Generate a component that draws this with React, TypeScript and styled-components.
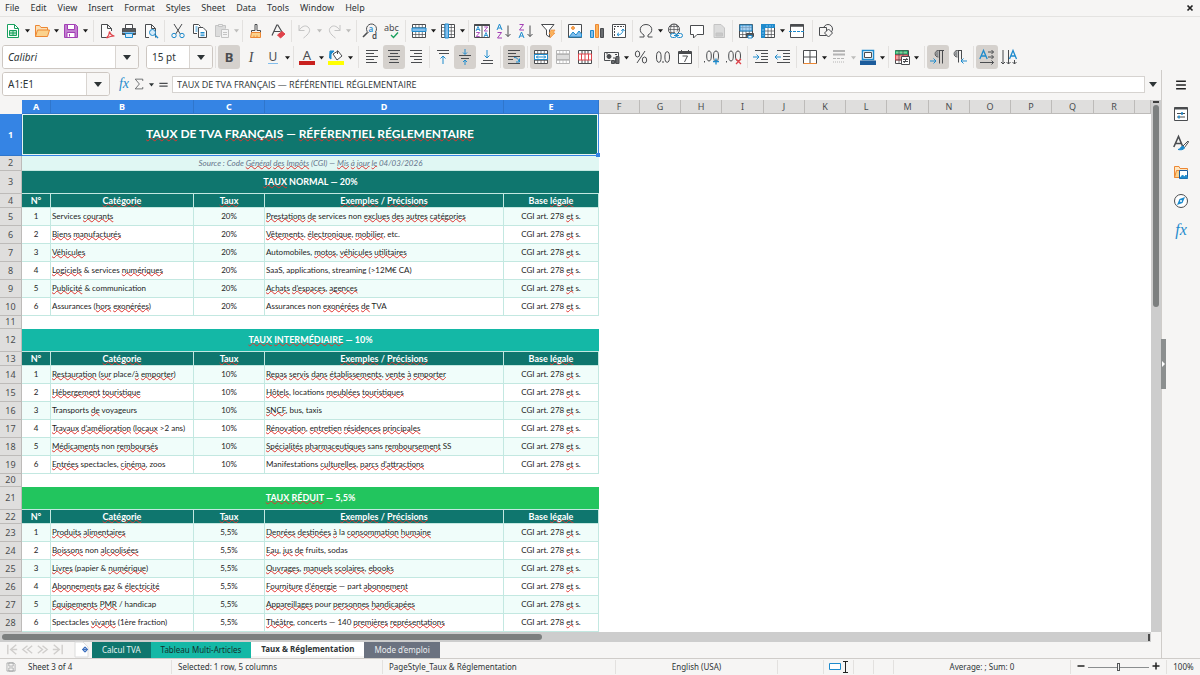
import React from 'react';
import styled, { createGlobalStyle, css } from 'styled-components';

const INK = '#4a4c4f';
const BLUE = '#1e8bcd';
const SKY = '#83beec';
const ORANGE = '#ed8733';
const PALE = '#c4c4c4';
const PURPLE = '#a33fb5';
const RED = '#e0434b';
const GREEN = '#18a05e';

const Global = createGlobalStyle`
  * { box-sizing: border-box; }
  body { margin: 0; background: #f6f5f4; color: #2e3436; font-family: "Noto Sans", "Open Sans", sans-serif; font-size: 11px; }
  button, input { font: inherit; color: inherit; margin: 0; }
  button { border: 0; padding: 0; background: none; }
  svg { overflow: visible; }
`;

const Window = styled.div`
  display: flex;
  flex-direction: column;
  height: 100vh;
  overflow: hidden;
  background: #f6f5f4;
`;

/* ---------- menu bar ---------- */
const MenuBar = styled.nav`
  display: flex;
  align-items: center;
  gap: 11px;
  height: 17px;
  padding: 0 6px 0 5px;
  border-bottom: 1px solid #e4e3e1;
`;
const MenuItem = styled.button`
  font-size: 9px;
  line-height: 16px;
`;
const CloseButton = styled.button`
  display: flex;
  margin-left: auto;
`;

/* ---------- tool bars ---------- */
const Toolbar = styled.div<{ $height: number }>`
  display: flex;
  align-items: center;
  height: ${p => p.$height}px;
  padding-left: 2px;
`;
const ToolButton = styled.button<{ $on?: boolean }>`
  display: flex;
  align-items: center;
  justify-content: center;
  flex: none;
  width: 22px;
  height: 24px;
  border-radius: 3px;
  background: ${p => (p.$on ? '#d5d1cd' : 'transparent')};
`;
const ArrowButton = styled.button<{ $off?: boolean }>`
  display: flex;
  align-items: center;
  justify-content: center;
  flex: none;
  width: 7px;
  height: 24px;
  color: ${p => (p.$off ? '#bdbdbb' : '#1b1b1b')};
`;
const Divider = styled.span<{ $wide?: boolean }>`
  flex: none;
  width: 1px;
  height: 22px;
  margin: 0 2px 0 ${p => (p.$wide ? 4 : 2)}px;
  background: #e3e1df;
`;
const Combo = styled.div<{ $width: number; $gap: number }>`
  display: flex;
  flex: none;
  width: ${p => p.$width}px;
  height: 24px;
  margin-right: ${p => p.$gap}px;
  border: 1px solid #cdc7c2;
  border-radius: 3px;
  overflow: hidden;
  background: #fff;
`;
const ComboInput = styled.input<{ $italic?: boolean }>`
  flex: 1;
  min-width: 0;
  padding: 0 5px;
  border: 0;
  background: #fff;
  font-size: 10px;
  font-style: ${p => (p.$italic ? 'italic' : 'normal')};
`;
const ComboArrow = styled.button`
  display: flex;
  align-items: center;
  justify-content: center;
  width: 23px;
  border-left: 1px solid #d9d5d1;
  background: #f8f7f6;
`;

/* ---------- work area ---------- */
const Main = styled.div`
  display: flex;
  flex: 1;
  min-height: 0;
`;
const Document = styled.div`
  display: flex;
  flex-direction: column;
  flex: 1;
  min-width: 0;
`;
const FormulaBar = styled.div`
  display: flex;
  align-items: center;
  height: 28px;
  margin-bottom: 2px;
  padding-left: 2px;
`;
const FormulaInput = styled.input`
  flex: 1;
  min-width: 0;
  height: 17px;
  margin-left: 2px;
  padding: 0 4px;
  border: 1px solid #d6d3d0;
  background: #fff;
  font-family: "Open Sans", "Noto Sans", sans-serif;
  font-size: 9px;
`;
const FormulaTool = styled.button<{ $width: number }>`
  display: flex;
  align-items: center;
  justify-content: center;
  flex: none;
  width: ${p => p.$width}px;
  height: 22px;
`;
const SheetArea = styled.div`
  display: flex;
  flex: 1;
  min-height: 0;
`;
const GridView = styled.div`
  flex: 1;
  min-width: 0;
  overflow: hidden;
  background: #fff;
`;
const VerticalTrack = styled.div`
  width: 10px;
  padding: 1px 2px 0;
  background: #cdcdcd;
`;
const SplitMark = styled.div`
  height: 2px;
  margin-bottom: 2px;
  background: #3d3d3d;
`;
const VerticalThumb = styled.div`
  height: 38%;
  border-radius: 3px;
  background: #7c7f7f;
`;
const HorizontalTrack = styled.div`
  display: flex;
  align-items: center;
  justify-content: space-between;
  height: 10px;
  margin-right: 10px;
  padding: 2px 1px 2px 2px;
  background: #cdcdcd;
`;
const HorizontalThumb = styled.div`
  width: 47%;
  height: 6px;
  border-radius: 3px;
  background: #7c7f7f;
`;
const EndMark = styled.div`
  width: 2px;
  height: 7px;
  background: #4a4a4a;
`;

/* ---------- grid ---------- */
const Grid = styled.table`
  width: 100%;
  table-layout: fixed;
  border-collapse: separate;
  border-spacing: 0;
`;
const Row = styled.tr<{ $height: number }>`
  height: ${p => p.$height}px;
`;
const headCell = css<{ $selected?: boolean }>`
  padding: 0;
  overflow: hidden;
  border-right: 1px solid ${p => (p.$selected ? '#2f76cc' : '#bdbbb9')};
  border-bottom: 1px solid ${p => (p.$selected ? '#2f76cc' : '#bdbbb9')};
  background: ${p => (p.$selected ? '#3584e4' : '#dfdedd')};
  color: ${p => (p.$selected ? '#fff' : '#4a4d4f')};
  font-size: 9px;
  font-weight: ${p => (p.$selected ? 700 : 400)};
  line-height: 12px;
`;
const ColHead = styled.th<{ $selected?: boolean }>`
  ${headCell}
`;
const RowHead = styled.th<{ $selected?: boolean }>`
  ${headCell}
`;
const Corner = styled.td`
  padding: 0;
  background: #f6f5f4;
`;
const Cell = styled.td<{ $bg: string; $left?: boolean }>`
  padding: 0 1px 1px;
  overflow: hidden;
  white-space: nowrap;
  border-right: 1px solid #c3e8e1;
  border-bottom: 1px solid #c3e8e1;
  background: ${p => p.$bg};
  color: #1d1d1d;
  font-family: Lato, "Noto Sans", sans-serif;
  font-size: 8px;
  line-height: 12px;
  text-align: ${p => (p.$left ? 'left' : 'center')};
`;
const FieldHead = styled(Cell).attrs({ $bg: '#0f766e' })`
  padding-bottom: 0;
  color: #fff;
  font-size: 9px;
  font-weight: 700;
`;
const Band = styled(Cell)`
  padding-bottom: 0;
  color: #fff;
  font-size: 9px;
  font-weight: 700;
  border-right: 0;
`;
const TitleCell = styled(Band)`
  position: relative;
  overflow: visible;
  padding-bottom: 1px;
  border-right: 1px solid #3584e4;
  border-bottom: 1px solid #3584e4;
  box-shadow: inset 0 0 0 1px #e6f5f3;
  font-size: 12px;
  line-height: 18px;
`;
const FillHandle = styled.span`
  position: absolute;
  right: -2px;
  bottom: -2px;
  width: 4px;
  height: 4px;
  background: #3584e4;
`;
const NoteCell = styled(Cell)`
  padding-bottom: 0;
  color: #64748b;
  font-style: italic;
  border-right: 0;
`;
const Blank = styled.td`
  padding: 0;
`;
const Misspelt = styled.span`
  text-decoration: underline wavy #e0352f;
  text-decoration-thickness: 1px;
  text-decoration-skip-ink: none;
  text-underline-offset: -1px;
`;

/* ---------- tabs ---------- */
const TabBar = styled.div`
  display: flex;
  align-items: flex-start;
  height: 16px;
  padding-left: 5px;
`;
const TabNav = styled.div`
  display: flex;
  width: 62px;
`;
const NavButton = styled.button`
  display: flex;
  width: 15px;
  height: 16px;
`;
const AddSheet = styled.button`
  display: flex;
  width: 18px;
  height: 15px;
  margin: 0 0 0 7px;
`;
const Tab = styled.button<{ $bg: string; $fg: string; $active?: boolean }>`
  height: ${p => (p.$active ? 14 : 16)}px;
  padding: 0 10px;
  background: ${p => p.$bg};
  color: ${p => p.$fg};
  font-size: 8px;
  font-weight: ${p => (p.$active ? 700 : 400)};
  line-height: 14px;
`;

/* ---------- side bar ---------- */
const SideBar = styled.aside`
  position: relative;
  display: flex;
  flex-direction: column;
  align-items: center;
  gap: 7px;
  width: 39px;
  padding-top: 4px;
  border-left: 1px solid #cfccc9;
`;
const SideButton = styled.button`
  display: flex;
  align-items: center;
  justify-content: center;
  width: 24px;
  height: 22px;
`;
const SideGrip = styled.button`
  position: absolute;
  left: -1px;
  top: calc(50% - 25px);
  display: flex;
  align-items: center;
  width: 5px;
  height: 50px;
  background: #8c8f8f;
`;

/* ---------- status bar ---------- */
const StatusBar = styled.footer`
  display: grid;
  grid-template-columns: 22px 150px 211fr 233fr 162fr 46px 30px 20px 20px 177fr 96px 33px;
  height: 17px;
  border-top: 1px solid #cfccc9;
  font-size: 8px;
`;
const StatusCell = styled.div<{ $align?: string }>`
  display: flex;
  align-items: center;
  justify-content: ${p => p.$align || 'center'};
  padding: 0 6px;
  margin: 1px 0;
  line-height: 14px;
  white-space: nowrap;
  border-right: 1px solid #e3e1df;
  &:first-child, &:last-child { border-right: 0; }
`;
const ZoomCell = styled(StatusCell)`
  gap: 3px;
`;
const ZoomSlider = styled.input`
  appearance: none;
  flex: 1;
  min-width: 0;
  height: 10px;
  background: linear-gradient(#8b8e8f, #8b8e8f) center / 100% 1px no-repeat;
  &::-webkit-slider-thumb {
    appearance: none;
    width: 3px;
    height: 8px;
    border: 1px solid #55585a;
    background: #f6f5f4;
  }
`;

/* ---------- icons ---------- */
const Svg = ({ children, size = 16 }: { children: React.ReactNode; size?: number }) => (
  <svg width={size} height={size} viewBox="0 0 16 16" fill="none" stroke={INK} strokeWidth="1" aria-hidden="true">
    {children}
  </svg>
);
const Glyph = ({ x, y, size, fill = INK, children, ...rest }: any) => (
  <text x={x} y={y} fontSize={size} fill={fill} stroke="none" fontFamily="Noto Sans, sans-serif" {...rest}>{children}</text>
);
const Caret = ({ w = 5 }: { w?: number }) => (
  <svg width={w} height={w} viewBox="0 0 8 8" aria-hidden="true"><path d="M0 2h8L4 7z" fill="currentColor" /></svg>
);
const lines = (rows: [number, number, number][], stroke = INK) =>
  rows.map(([x1, x2, y]) => <path key={y} d={`M${x1} ${y}H${x2}`} stroke={stroke} />);
const gridLines = (stroke = INK) => <><path d="M1.500 1.500h13v13h-13z" fill="#fff" stroke={stroke} /><path d="M1.500 4.500h13M1.500 8h13M1.500 11.500h13M4.700 1.500v13M8 1.500v13M11.300 1.500v13" stroke={stroke} strokeWidth=".7" /></>;

const icons: Record<string, React.ReactNode> = {
  new: <><path d="M2.500 1.500h7l4 4v9h-11z" fill="#fff" stroke={GREEN} /><path d="M9.500 1.500v4h4" stroke={GREEN} /><path d="M4.500 7.500h7v5h-7zM4.500 10h7M8 7.500v5" stroke={GREEN} fill="#b5e5c8" /></>,
  open: <><path d="M1.500 13.500v-11h4l1.500 2h6.500v3" stroke={ORANGE} fill="#fbe0b6" /><path d="M1.500 13.500l2-6.500h12l-2 6.500z" fill="#fbd28d" stroke={ORANGE} /></>,
  save: <><path d="M1.500 1.500h11l2 2v11h-13z" fill="#c27fd0" stroke={PURPLE} /><path d="M4.500 1.500h7v5h-7zM4 9.500h8v5H4z" fill="#fff" stroke={PURPLE} /><path d="M6.500 11v2.500" stroke={PURPLE} /></>,
  pdf: <><path d="M8 14.500H2.500v-13h6l4 4V8M8.500 1.500v4h4" fill="#fcfcfc" /><path d="M7.500 15c2-2 3-4 3-6.500 1 3 2 4.500 5 4.500-3 0-5 .5-8 2z" stroke={RED} strokeWidth="1.200" /></>,
  print: <><path d="M4.500 5.500v-4h7v4" fill="#fff" /><path d="M1.500 5.500h13v6h-13z" fill="#55585b" /><path d="M1.500 9.500h13" stroke={SKY} /><path d="M4.500 10.500h7v4h-7z" fill="#d7ebf9" stroke={BLUE} /></>,
  preview: <><path d="M6 14.500H2.500v-13h6l4 4M8.500 1.500v4h4v9" fill="#fcfcfc" /><circle cx="9.500" cy="9.500" r="3" stroke={BLUE} fill="#d7ebf9" /><path d="M12 12l3 3" stroke={BLUE} strokeWidth="1.400" /></>,
  cut: <><path d="M4 1l6.300 10M12 1L5.700 11" /><circle cx="4" cy="12.500" r="2.200" stroke={BLUE} /><circle cx="12" cy="12.500" r="2.200" stroke={BLUE} /></>,
  copy: <><path d="M5 10.500H1.500v-9h5l2 2" fill="#fff" /><path d="M3.500 4h2M3.500 6h2M3.500 8h2" stroke={BLUE} /><path d="M6.500 4.500h4.500l3.500 3.500v6.500h-8z" fill="#fff" /><path d="M8.500 9.500h4M8.500 11h4M8.500 12.700h4" stroke={BLUE} /></>,
  paste: <><path d="M6 13.500H1.500v-11h10v3" fill="#dcdcdc" stroke={PALE} /><path d="M4.500 1.500h4v2h-4z" fill="#eee" stroke={PALE} /><path d="M7.500 6.500h7v8h-7z" fill="#f4f4f4" stroke={PALE} /><path d="M9 9.500h4M9 11.500h4" stroke={PALE} /></>,
  brush: <><path d="M7 1.500h2v6h3.500v2h-9v-2H7z" /><path d="M3.500 9.500h9v5h-10z" fill="#fbd28d" stroke={ORANGE} /><path d="M6 14.500v-2M9 14.500v-2" stroke={ORANGE} /></>,
  clear: <><path d="M2 12.500L6.800 2h1L12 9M4 8.500h6.500" strokeWidth="1.200" /><path d="M7.500 12l4.500-3.500 3 2.500-4.500 4z" fill={RED} stroke={RED} /></>,
  undo: <path d="M2 2v5.500h5.500M2 7.500C4 4 8 1.500 11 4c3.500 3 1 7-4.500 11" stroke={PALE} />,
  redo: <path d="M14 2v5.500H8.500M14 7.500C12 4 8 1.500 5 4 1.500 7 4 11 9.500 15" stroke={PALE} />,
  find: <><path d="M13.500 9a5 5 0 1 0-7 1" /><path d="M5.500 9.500L1 14" strokeWidth="1.600" /><Glyph x="6.500" y="8.500" size="8" fill={BLUE} fontWeight="600">a</Glyph><Glyph x="10" y="16" size="8" fontWeight="600">d</Glyph></>,
  spell: <><Glyph x="0" y="8" size="9">abc</Glyph><path d="M7 12l2.500 2.500L14 9.500" stroke={GREEN} strokeWidth="1.300" /></>,
  row: <>{gridLines()}<path d="M1 5h14v3.500H1z" fill={SKY} stroke={BLUE} /></>,
  col: <>{gridLines()}<path d="M5 1h3.500v14H5z" fill={SKY} stroke={BLUE} /></>,
  sort: <><path d="M.5 1.500h15v13H.5zM8 1.500v13" fill="#fff" /><path d="M.5 2h15" strokeWidth="2" /><path d="M2 8l2-4.500L6 8M2.700 6.500h2.600M10 14l2-4.500 2 4.500M10.700 12.500h2.600" stroke={BLUE} strokeWidth=".9" /><path d="M2.200 9.500h3.500l-3.500 4h3.500M10.200 4h3.500l-3.500 4h3.500" stroke={PURPLE} strokeWidth=".9" /></>,
  asc: <><path d="M1 7l2.500-6L6 7M2 5h3" stroke={BLUE} /><path d="M1.500 9.500h4l-4 5.500h4.500" stroke={PURPLE} /><path d="M12 2.500v11M9.500 11l2.500 2.500 2.500-2.500" /></>,
  desc: <><path d="M1.500 1.500h4L1.500 7h4.500" stroke={PURPLE} /><path d="M1 15l2.500-6L6 15M2 13h3" stroke={BLUE} /><path d="M12 2.500v11M9.500 11l2.500 2.500 2.500-2.500" /></>,
  filter: <><path d="M1.500 1.500h12.500L9.500 7v7l-3-2V7z" fill="#fff" /><path d="M11 7h4l-2 3h2l-5 5 1-4H9z" fill="#fbb45c" stroke={ORANGE} strokeWidth=".6" /></>,
  image: <><path d="M1.500 1.500h13v13h-13z" fill="#fff" /><path d="M2 14l4-5 3 3 3-4 2.500 3v3z" fill={SKY} stroke={BLUE} /><circle cx="6" cy="5" r="1.400" fill="#fbb45c" stroke={ORANGE} /></>,
  chart: <><path d="M1.500 7.500h3v7h-3z" fill={SKY} stroke={BLUE} /><path d="M6.500 1.500h3v13h-3z" fill="#fbb45c" stroke={ORANGE} /><path d="M11.500 5.500h3v9h-3z" fill="#6a6d70" /></>,
  pivot: <><path d="M1.500 1.500h13v13h-13z" fill="#fff" /><path d="M3 3.500h10M3.500 5v8" strokeDasharray="2 1" /><path d="M6 11.500c4 1 6-2 6-5M12 6l-1.700 2M12 6l1.500 2M6 11.500l2-1.800M6 11.500l2 1.500" stroke={BLUE} /></>,
  omega: <path d="M1.500 14H6v-2C0 9 1.500 1.500 8 1.500S16 9 10 12v2h4.500" />,
  link: <><circle cx="7" cy="6.500" r="5.500" /><path d="M1.500 6.500h11M7 1v11M3 3.500h8M3 9.500h5M5 1.500c-2 3-2 7 0 10M9 1.500c2 3 2 5 1 7" strokeWidth=".7" /><rect x="3.500" y="10.500" width="6" height="4" rx="2" stroke={BLUE} fill="#f6f5f4" /><rect x="9.500" y="10.500" width="6" height="4" rx="2" stroke={BLUE} /><path d="M7 12.500h5" stroke={BLUE} /></>,
  comment: <path d="M1.500 2.500h13v9H8L4.500 15v-3.500h-3z" fill="#fff" />,
  header: <><path d="M3 1.500h7l3.500 3.500v9.500H3z" fill="#dcdcdc" stroke={PALE} /><path d="M5 10h6.500v3H5z" fill="#c9c9c9" stroke={PALE} /></>,
  printArea: <>{gridLines()}<path d="M2 2h12v6H2z" fill={SKY} fillOpacity=".7" stroke={BLUE} /><path d="M8.500 10.500h7v3h-7z" fill="#55585b" /><path d="M10 12.500h4v2.500h-4z" fill="#fff" stroke={BLUE} /></>,
  freeze: <>{gridLines()}<path d="M1.500 1.500h13v3h-10v10h-3z" fill={BLUE} stroke={BLUE} /><path d="M6 3h7M3 6v7" stroke={SKY} strokeDasharray="2 1" /></>,
  split: <><path d="M1.500 1.500h13v13h-13z" fill="#fff" /><path d="M1.500 2.500h13" strokeWidth="2.500" /><path d="M0 8.500h16" stroke={BLUE} strokeDasharray="3 1" /></>,
  draw: <><circle cx="10" cy="6" r="4.500" /><path d="M1.500 4.500h7v8h-7z" fill="#f6f5f4" /><path d="M10.500 6l4 4-4 4-4-4z" fill="#f6f5f4" /></>,
  bold: <Glyph x="8" y="13" size="13" fontWeight="700" textAnchor="middle">B</Glyph>,
  italic: <Glyph x="8" y="12.500" size="14" fontStyle="italic" textAnchor="middle" fontFamily="Liberation Serif, serif">I</Glyph>,
  underline: <><Glyph x="8" y="12" size="12" textAnchor="middle">U</Glyph><path d="M3 14.500h10" stroke={SKY} /></>,
  fontColor: <><Glyph x="8" y="10.500" size="13" textAnchor="middle">A</Glyph><path d="M0 12h16v4H0z" fill="#c9211e" stroke="none" /></>,
  highlight: <><path d="M5 5l5-3 4 5-5 4z" fill="#fff" /><path d="M9.500 5V1.500" /><path d="M2 2h4L3 5v5L1.500 9z" fill={BLUE} stroke={BLUE} /><path d="M0 12h16v4H0z" fill="#ff0" stroke="none" /></>,
  left: lines([[2, 14, 1.5], [2, 10, 4.5], [2, 14, 7.5], [2, 10, 10.5], [2, 13, 13.5]]),
  center: lines([[2, 14, 1.5], [4, 12, 4.5], [2, 14, 7.5], [4, 12, 10.5], [3, 13, 13.5]]),
  right: lines([[2, 14, 1.5], [6, 14, 4.5], [2, 14, 7.5], [6, 14, 10.5], [3, 14, 13.5]]),
  top: <>{lines([[2, 14, 1.5], [4, 14, 4.5]])}<path d="M8 15V7M5.500 9.500L8 7l2.500 2.500" stroke={BLUE} /></>,
  middle: <>{lines([[2, 14, 6.5], [4, 12, 9.5]])}<path d="M8 0v5M6 3.500l2 2 2-2M8 16v-4.500M6 13l2-2 2 2" stroke={BLUE} /></>,
  bottom: <>{lines([[4, 14, 11.5], [2, 14, 14.5]])}<path d="M8 1v8M5.500 6.500L8 9l2.500-2.500" stroke={BLUE} /></>,
  wrap: <>{lines([[2, 14, 1.5], [2, 10, 4.5], [2, 14, 7.5], [2, 7, 10.5], [2, 14, 14.5]])}<path d="M8 8.500c3 0 4 1 5 4M13.500 9.500v3.500H10" stroke={BLUE} /></>,
  merge: <>{gridLines()}<path d="M1.500 5.500h13v5h-13z" fill="#fff" stroke={BLUE} /><path d="M3 8h10M5 6.500L3.500 8 5 9.500M11 6.500L12.500 8 11 9.500" stroke={BLUE} /></>,
  unmerge: <>{gridLines('#b4b4b4')}<path d="M1.500 5.500h13v5h-13z" fill="#dcdcdc" stroke="#b4b4b4" /></>,
  split2: <><path d="M1.500 1.500h13v13h-13zM5 1.500v4M11 1.500v4M8 1.500v4M5 11v3M8 11v3M11 11v3" fill="#fff" /><path d="M1.500 5h13v6h-13zM8 5v6M4.500 5v6M11.500 5v6" fill="#fff" stroke={RED} /></>,
  currency: <><path d="M14.500 7V3.500H.5v8h6" /><circle cx="5" cy="7.500" r="2" fill={INK} /><path d="M3 3.500v2M11 5.500h2" /><path d="M7.500 11.500h3v3h-3zM12 7.500h3v7h-3z" fill="#6a6d70" /><path d="M9 9h2.500v5.500" /></>,
  percent: <g strokeWidth="1"><ellipse cx="4.500" cy="5" rx="2.200" ry="3" /><ellipse cx="11.500" cy="11" rx="2.200" ry="3" /><path d="M12 2L4 14" /></g>,
  number: <g strokeWidth="1"><ellipse cx="3.800" cy="8" rx="2.300" ry="5.300" /><ellipse cx="12.200" cy="8" rx="2.300" ry="5.300" /><path d="M8 12v2" /></g>,
  date: <><path d="M1.500 2.500h13v12h-13z" fill="#fff" /><path d="M1.500 4h13" strokeWidth="2" /><path d="M4.500 1v3M11.500 1v3" /><path d="M5.500 7h5l-3 6" /></>,
  addDec: <><path d="M.5 12v1.500" /><ellipse cx="5" cy="7" rx="2.300" ry="5" /><ellipse cx="12" cy="7" rx="2.500" ry="5" /><path d="M12 9.500v6M9 12.500h6" stroke={BLUE} strokeWidth="1.300" /></>,
  delDec: <><path d="M.5 12v1.500" /><ellipse cx="5" cy="7" rx="2.300" ry="5" /><ellipse cx="12" cy="7" rx="2.500" ry="5" /><path d="M10 10l5 5M15 10l-5 5" stroke={RED} strokeWidth="1.300" /></>,
  indent: <>{lines([[2, 15, 1.5], [8, 15, 4.5], [8, 15, 7.5], [8, 15, 10.5], [2, 15, 13.5]])}<path d="M0 8h6M3.500 5.500L6 8l-2.500 2.500" stroke={BLUE} /></>,
  outdent: <>{lines([[2, 15, 1.5], [8, 15, 4.5], [8, 15, 7.5], [8, 15, 10.5], [2, 15, 13.5]])}<path d="M6 8H0M2.500 5.500L0 8l2.500 2.500" stroke={BLUE} /></>,
  borders: <><path d="M1.500 1.500h13v13h-13zM8 1.500v13M1.500 8h13" fill="#fff" /><path d="M1.500 14.500h13" stroke={ORANGE} /></>,
  lineStyle: <><path d="M2 2h12M2 5.500h12" stroke="#b4b4b4" strokeWidth="2" /><path d="M2 9.500h12" stroke="#b4b4b4" strokeDasharray="3 1" /><path d="M2 13h12" stroke="#b4b4b4" strokeDasharray="1 1" /></>,
  lineColor: <><path d="M2.500 1.500h11v9h-11z" fill="#fff" stroke={BLUE} strokeWidth="1.500" /><path d="M4.500 3.500h7v5h-7z" stroke={INK} /><path d="M0 11.500h16V16H0z" fill="#1c5c9c" stroke="none" /></>,
  conditional: <><path d="M1.500 1.500h13v13h-13z" fill="#fff" /><path d="M1.500 2h12v3h-12z" fill="#7bd39a" stroke={GREEN} /><path d="M1.500 6h12v5h-12z" fill="#f3a3a3" stroke={RED} /><path d="M5 1.500v13M9 1.500v13M1.500 5.500h13M1.500 11h13" strokeWidth=".7" /><path d="M7.500 7.500h8v8h-8z" fill="#fff" /><path d="M9 10.500h5M9 12.500h5M13 9l-3 5" /></>,
  ltr: <><path d="M14 1.500H8.500C4 1.500 4 8 8.500 8M9.500 1.500v13M12.500 1.500v13" /><path d="M8.500 2v5.500C5 7.500 5 2 8.500 2z" fill="#8d9093" stroke="none" /><path d="M0 12h6M3.500 9.500L6 12l-2.500 2.500" stroke={BLUE} /></>,
  rtl: <><path d="M10 1.500H5.500C1 1.500 1 8 5.500 8M6.500 1.500v12M9.500 1.500v9" /><path d="M5.500 2v5.500C2 7.500 2 2 5.500 2z" fill="#8d9093" stroke="none" /><path d="M15 12H9M11.500 9.500L9 12l2.500 2.500" stroke={BLUE} /></>,
  horizontal: <><path d="M.8 10L4.500 1.500 8.200 10M2 7h5" stroke={BLUE} strokeWidth="1.300" /><path d="M9 3h5.500M12.500 1l2 2-2 2M9 8h5.500M12.500 6l2 2-2 2M1 13.500h13.500M12.500 11.500l2 2-2 2" /></>,
  vertical: <><path d="M8.500 10l3.500-8.500L15.500 10M9.800 7h4.500" stroke={BLUE} strokeWidth="1.300" /><path d="M2 1v14M0 13l2 2 2-2M7.500 1v14M5.500 13l2 2 2-2M13.500 11v4M11.500 13l2 2 2-2" /></>,
  fx: <Glyph x="8" y="12.500" size="16" fill={BLUE} fontStyle="italic" textAnchor="middle" fontFamily="Liberation Serif, serif">fx</Glyph>,
  sum: <path d="M13 4V1.500H3L8.500 8 3 14.500h10V12" />,
  equals: <path d="M2 6.500h12M2 10.500h12" strokeWidth="1.800" />,
  menu: <path d="M1.500 3h13M1.500 8h13M1.500 13h13" stroke="#222" strokeWidth="1.700" />,
  properties: <><path d="M1.500 1.500h13v13h-13z" fill="#fff" /><path d="M1.500 2.500h13" strokeWidth="2" /><path d="M4 7.500h8M4 11h8" stroke={INK} /><path d="M9 6v3M6 9.500v3" stroke={BLUE} strokeWidth="1.500" /></>,
  styles: <><path d="M.8 12L5.500 1.500 9.500 11M2.500 8.500h6" strokeWidth="1.600" /><path d="M15 6l-5 5 1.500 1.500L15.500 7z" fill="#fff" /><path d="M5 14.500c3 0 2-3 5-3.500l1.500 2c-1 2-4 2-6.500 1.500z" fill={BLUE} stroke={BLUE} /></>,
  gallery: <><path d="M1.500 13.500v-11H6l1 2h7.500V6" fill="#fde6c2" stroke={ORANGE} /><path d="M1.500 13.500l2-7h3v7z" fill="#fbd28d" stroke={ORANGE} /><path d="M6.500 6.500h8v8h-8z" fill="#fff" stroke="#1c5c9c" /><path d="M7 14l2.500-3 2 2 1.500-2 1.500 3z" fill={BLUE} stroke={BLUE} /></>,
  navigator: <><circle cx="8" cy="8" r="6.500" fill="#fff" /><path d="M12 4l-2.500 6L4 12l2.500-6z" fill={BLUE} stroke="none" /><circle cx="8" cy="8" r="1" fill="#fff" stroke="none" /></>,
  diskGrey: <path d="M1.500 1.500h11l2 2v11h-13zM4.500 1.500h7v5h-7zM4.500 9.500h7v5h-7z" stroke="#8d8f90" />,
};

type Tool = { icon: string; label: string; on?: boolean; arrow?: boolean; off?: boolean };
const t = (icon: string, label: string, more: Partial<Tool> = {}): Tool => ({ icon, label, ...more });
type Group = { tools: Tool[]; wide?: boolean };

const standard: Group[] = [
  { wide: true, tools: [t('new', 'New', { arrow: true }), t('open', 'Open', { arrow: true }), t('save', 'Save', { arrow: true })] },
  { tools: [t('pdf', 'Export as PDF'), t('print', 'Print'), t('preview', 'Print Preview')] },
  { tools: [t('cut', 'Cut'), t('copy', 'Copy'), t('paste', 'Paste', { arrow: true, off: true })] },
  { tools: [t('brush', 'Clone Formatting'), t('clear', 'Clear Formatting')] },
  { wide: true, tools: [t('undo', 'Undo', { arrow: true, off: true }), t('redo', 'Redo', { arrow: true, off: true })] },
  { tools: [t('find', 'Find and Replace'), t('spell', 'Spelling')] },
  { tools: [t('row', 'Row', { arrow: true }), t('col', 'Column', { arrow: true })] },
  { tools: [t('sort', 'Sort'), t('asc', 'Sort Ascending'), t('desc', 'Sort Descending'), t('filter', 'AutoFilter')] },
  { tools: [t('image', 'Insert Image'), t('chart', 'Insert Chart'), t('pivot', 'Pivot Table')] },
  { tools: [t('omega', 'Special Character', { arrow: true }), t('link', 'Hyperlink'), t('comment', 'Comment'), t('header', 'Headers and Footers')] },
  { wide: true, tools: [t('printArea', 'Print Area'), t('freeze', 'Freeze', { arrow: true }), t('split', 'Split Window')] },
  { tools: [t('draw', 'Draw Functions')] },
];

const formatting: Group[] = [
  { tools: [t('bold', 'Bold', { on: true }), t('italic', 'Italic'), t('underline', 'Underline', { arrow: true })] },
  { wide: true, tools: [t('fontColor', 'Font Color', { arrow: true }), t('highlight', 'Background Color', { arrow: true })] },
  { tools: [t('left', 'Align Left'), t('center', 'Align Center', { on: true }), t('right', 'Align Right')] },
  { tools: [t('top', 'Align Top'), t('middle', 'Center Vertically', { on: true }), t('bottom', 'Align Bottom')] },
  { tools: [t('wrap', 'Wrap Text', { on: true })] },
  { tools: [t('merge', 'Merge and Center', { on: true }), t('unmerge', 'Merge Cells'), t('split2', 'Unmerge Cells')] },
  { tools: [t('currency', 'Currency', { arrow: true }), t('percent', 'Percent'), t('number', 'Number'), t('date', 'Date')] },
  { tools: [t('addDec', 'Add Decimal Place'), t('delDec', 'Delete Decimal Place')] },
  { tools: [t('indent', 'Increase Indent'), t('outdent', 'Decrease Indent')] },
  { tools: [t('borders', 'Borders', { arrow: true }), t('lineStyle', 'Border Style', { arrow: true, off: true }), t('lineColor', 'Border Color', { arrow: true })] },
  { wide: true, tools: [t('conditional', 'Conditional Formatting', { arrow: true })] },
  { tools: [t('ltr', 'Left-To-Right', { on: true }), t('rtl', 'Right-To-Left')] },
  { tools: [t('horizontal', 'Text left to right', { on: true }), t('vertical', 'Text top to bottom')] },
];

const Tools = ({ groups }: { groups: Group[] }) => (
  <>
    {groups.map((g, i) => (
      <React.Fragment key={i}>
        {g.tools.map(tool => (
          <React.Fragment key={tool.icon}>
            <ToolButton type="button" aria-label={tool.label} aria-pressed={tool.on} $on={tool.on}>
              <Svg>{icons[tool.icon]}</Svg>
            </ToolButton>
            {tool.arrow && <ArrowButton type="button" aria-label={`${tool.label} options`} $off={tool.off}><Caret /></ArrowButton>}
          </React.Fragment>
        ))}
        {i < groups.length - 1 && <Divider $wide={g.wide} />}
      </React.Fragment>
    ))}
  </>
);

/* Words between asterisks carry the spell-check underline. */
const Spelled = ({ text }: { text: string }) => (
  <>{text.split('*').map((part, i) => (i % 2 ? <Misspelt key={i}>{part}</Misspelt> : part))}</>
);

type Section = { title: string; color: string; rate: string; items: [string, string][] };
const sections: Section[] = [
  {
    title: '*TAUX* NORMAL — 20%', color: '#0f766e', rate: '20%', items: [
      ['Services *courants*', '*Prestations* *de* services non *exclues* *des* *autres* *catégories*'],
      ['*Biens* *manufacturés*', '*Vêtements*, *électronique*, *mobilier*, etc.'],
      ['*Véhicules*', 'Automobiles, *motos*, *véhicules* *utilitaires*'],
      ['*Logiciels* & services *numériques*', 'SaaS, applications, streaming (>12M€ CA)'],
      ['*Publicité* & communication', '*Achats* *d’espaces*, *agences*'],
      ['Assurances (*hors* *exonérées*)', 'Assurances non *exonérées* *de* TVA'],
    ],
  },
  {
    title: '*TAUX* *INTERMÉDIAIRE* — 10%', color: '#14b8a6', rate: '10%', items: [
      ['*Restauration* (*sur* place/*à* *emporter*)', '*Repas* *servis* *dans* *établissements*, *vente* *à* *emporter*'],
      ['*Hébergement* *touristique*', '*Hôtels*, locations *meublées* *touristiques*'],
      ['Transports *de* voyageurs', '*SNCF*, bus, taxis'],
      ['*Travaux* *d’amélioration* (*locaux* >2 ans)', '*Rénovation*, *entretien* *résidences* *principales*'],
      ['*Médicaments* non *remboursés*', '*Spécialités* *pharmaceutiques* sans *remboursement* SS'],
      ['*Entrées* spectacles, *cinéma*, zoos', 'Manifestations *culturelles*, *parcs* *d’attractions*'],
    ],
  },
  {
    title: '*TAUX* *RÉDUIT* — 5,5%', color: '#22c55e', rate: '5,5%', items: [
      ['*Produits* *alimentaires*', '*Denrées* *destinées* *à* la *consommation* *humaine*'],
      ['*Boissons* non *alcoolisées*', '*Eau*, *jus* *de* fruits, sodas'],
      ['*Livres* (papier & *numérique*)', '*Ouvrages*, *manuels* *scolaires*, *ebooks*'],
      ['*Abonnements* *gaz* & *électricité*', '*Fourniture* *d’énergie* — part *abonnement*'],
      ['*Équipements* *PMR* / handicap', '*Appareillages* pour *personnes* *handicapées*'],
      ['Spectacles *vivants* (1ère fraction)', '*Théâtre*, concerts — 140 *premières* *représentations*'],
    ],
  },
];

const dataCols = [29, 143, 71, 239, 95];
const spareCols = 'FGHIJKLMNOPQR'.split('');
const spareSpan = spareCols.length + 1;

const SectionRows = ({ section, start, last }: { section: Section; start: number; last: boolean }) => (
  <>
    <Row $height={23}>
      <RowHead scope="row">{start}</RowHead>
      <Band colSpan={5} $bg={section.color}><Spelled text={section.title} /></Band>
      <Blank colSpan={spareSpan} />
    </Row>
    <Row $height={14}>
      <RowHead scope="row">{start + 1}</RowHead>
      {['N°', '*Catégorie*', '*Taux*', '*Exemples* / *Précisions*', 'Base *légale*'].map(h => (
        <FieldHead key={h}><Spelled text={h} /></FieldHead>
      ))}
      <Blank colSpan={spareSpan} />
    </Row>
    {section.items.map(([category, details], i) => {
      const bg = i % 2 ? '#fff' : '#f0fdfa';
      return (
        <Row $height={18} key={category}>
          <RowHead scope="row">{start + 2 + i}</RowHead>
          <Cell $bg={bg}>{i + 1}</Cell>
          <Cell $bg={bg} $left><Spelled text={category} /></Cell>
          <Cell $bg={bg}>{section.rate}</Cell>
          <Cell $bg={bg} $left><Spelled text={details} /></Cell>
          <Cell $bg={bg}><Spelled text="CGI art. 278 *et* s." /></Cell>
          <Blank colSpan={spareSpan} />
        </Row>
      );
    })}
    {!last && (
      <Row $height={13}>
        <RowHead scope="row">{start + 8}</RowHead>
        <Blank colSpan={spareSpan + 5} />
      </Row>
    )}
  </>
);

const navPaths = ['M3 3v10M12 3L6 8l6 5M6 8h7', 'M8 4L3 8l5 4M13 4L8 8l5 4', 'M3 4l5 4-5 4M8 4l5 4-5 4', 'M13 3v10M4 3l6 5-6 5M3 8h7'];
const tabs = [
  { name: 'Calcul TVA', bg: '#0f766e', fg: '#e8f3f2' },
  { name: 'Tableau Multi-Articles', bg: '#14b8a6', fg: '#12312d' },
  { name: 'Taux & Réglementation', bg: '#fff', fg: '#2e3436', active: true },
  { name: 'Mode d’emploi', bg: '#6b7280', fg: '#eceef0' },
];
const sideTools: [string, string][] = [['menu', 'Sidebar Settings'], ['properties', 'Properties'], ['styles', 'Styles'], ['gallery', 'Gallery'], ['navigator', 'Navigator'], ['fx', 'Functions']];

export default function App() {
  return (
    <Window>
      <Global />
      <MenuBar aria-label="Main menu">
        {['File', 'Edit', 'View', 'Insert', 'Format', 'Styles', 'Sheet', 'Data', 'Tools', 'Window', 'Help'].map(m => (
          <MenuItem type="button" key={m}>{m}</MenuItem>
        ))}
        <CloseButton type="button" aria-label="Close document">
          <svg width="8" height="8" viewBox="0 0 8 8" aria-hidden="true"><path d="M1.500 1.500l5 5M6.500 1.500l-5 5" stroke="#222" strokeWidth="1.700" /></svg>
        </CloseButton>
      </MenuBar>
      <Toolbar $height={27}><Tools groups={standard} /></Toolbar>
      <Toolbar $height={26}>
        <Combo $width={137} $gap={7}>
          <ComboInput aria-label="Font name" defaultValue="Calibri" $italic />
          <ComboArrow type="button" aria-label="Choose font"><Caret w={8} /></ComboArrow>
        </Combo>
        <Combo $width={67} $gap={0}>
          <ComboInput aria-label="Font size" defaultValue="15 pt" />
          <ComboArrow type="button" aria-label="Choose font size"><Caret w={8} /></ComboArrow>
        </Combo>
        <Divider />
        <Tools groups={formatting} />
      </Toolbar>
      <Main>
        <Document>
          <FormulaBar>
            <Combo $width={108} $gap={6}>
              <ComboInput aria-label="Name box" defaultValue="A1:E1" />
              <ComboArrow type="button" aria-label="Choose range"><Caret w={8} /></ComboArrow>
            </Combo>
            <FormulaTool type="button" aria-label="Function Wizard" $width={16}><Svg size={14}>{icons.fx}</Svg></FormulaTool>
            <FormulaTool type="button" aria-label="Select Function" $width={14}><Svg size={12}>{icons.sum}</Svg></FormulaTool>
            <FormulaTool type="button" aria-label="Select Function options" $width={10}><Caret /></FormulaTool>
            <FormulaTool type="button" aria-label="Formula" $width={14}><Svg size={11}>{icons.equals}</Svg></FormulaTool>
            <FormulaInput aria-label="Input line" defaultValue="TAUX DE TVA FRANÇAIS — RÉFÉRENTIEL RÉGLEMENTAIRE" />
            <FormulaTool type="button" aria-label="Expand Formula Bar" $width={16}><Caret w={8} /></FormulaTool>
          </FormulaBar>
          <SheetArea>
            <GridView>
              <Grid>
                <colgroup>
                  <col style={{ width: 22 }} />
                  {dataCols.map((w, i) => <col key={i} style={{ width: w }} />)}
                  {spareCols.map((c, i) => <col key={c} style={{ width: i % 4 === 3 ? 42 : 41 }} />)}
                  <col />
                </colgroup>
                <thead>
                  <Row $height={14}>
                    <Corner />
                    {'ABCDE'.split('').map(c => <ColHead scope="col" key={c} $selected>{c}</ColHead>)}
                    {spareCols.map(c => <ColHead scope="col" key={c}>{c}</ColHead>)}
                    <ColHead as="td" />
                  </Row>
                </thead>
                <tbody>
                  <Row $height={42}>
                    <RowHead scope="row" $selected>1</RowHead>
                    <TitleCell colSpan={5} $bg="#0f766e">
                      <Spelled text="*TAUX* DE TVA *FRANÇAIS* — *RÉFÉRENTIEL* *RÉGLEMENTAIRE*" />
                      <FillHandle />
                    </TitleCell>
                    <Blank colSpan={spareSpan} />
                  </Row>
                  <Row $height={15}>
                    <RowHead scope="row">2</RowHead>
                    <NoteCell colSpan={5} $bg="#e0f7f3">
                      <Spelled text="Source : Code *Général* *des* *Impôts* (CGI) — *Mis* *à* *jour* *le* 04/03/2026" />
                    </NoteCell>
                    <Blank colSpan={spareSpan} />
                  </Row>
                  {sections.map((s, i) => (
                    <SectionRows key={s.title} section={s} start={3 + i * 9} last={i === sections.length - 1} />
                  ))}
                </tbody>
              </Grid>
            </GridView>
            <VerticalTrack><SplitMark /><VerticalThumb /></VerticalTrack>
          </SheetArea>
          <HorizontalTrack><HorizontalThumb /><EndMark /></HorizontalTrack>
          <TabBar>
            <TabNav>
              {navPaths.map((d, i) => (
                <NavButton type="button" key={d} aria-label={['First', 'Previous', 'Next', 'Last'][i] + ' sheet'}>
                  <Svg size={15}><path d={d} stroke="#d0cecc" strokeWidth="1.500" /></Svg>
                </NavButton>
              ))}
            </TabNav>
            <AddSheet type="button" aria-label="Add sheet">
              <Svg><path d="M1 0h8l5 5v10H1z" fill="#fff" stroke="#dcdcdc" /><circle cx="11" cy="7.500" r="2" stroke="#2a62b8" /><path d="M11 4.500v6M8 7.500h6" stroke="#2a62b8" strokeWidth=".8" /></Svg>
            </AddSheet>
            {tabs.map(tab => (
              <Tab type="button" key={tab.name} $bg={tab.bg} $fg={tab.fg} $active={tab.active}>{tab.name}</Tab>
            ))}
          </TabBar>
        </Document>
        <SideBar aria-label="Sidebar">
          {sideTools.map(([icon, label]) => (
            <SideButton type="button" key={icon} aria-label={label}><Svg size={icon === 'menu' ? 12 : 16}>{icons[icon]}</Svg></SideButton>
          ))}
          <SideGrip type="button" aria-label="Hide sidebar">
            <svg width="5" height="6" viewBox="0 0 5 6" aria-hidden="true"><path d="M1 0l3 3-3 3z" fill="#fff" /></svg>
          </SideGrip>
        </SideBar>
      </Main>
      <StatusBar>
        <StatusCell><Svg size={10}>{icons.diskGrey}</Svg></StatusCell>
        <StatusCell $align="flex-start">Sheet 3 of 4</StatusCell>
        <StatusCell $align="flex-start">Selected: 1 row, 5 columns</StatusCell>
        <StatusCell $align="flex-start">PageStyle_Taux &amp; Réglementation</StatusCell>
        <StatusCell>English (USA)</StatusCell>
        <StatusCell />
        <StatusCell>
          <svg width="20" height="12" viewBox="0 0 20 12" fill="none" aria-hidden="true">
            <path d="M.5 2.500h11v6H.5z" stroke={BLUE} fill="#fff" /><path d="M14 .5h5M14 11.500h5M16.500 .5v11" stroke="#222" />
          </svg>
        </StatusCell>
        <StatusCell />
        <StatusCell />
        <StatusCell>Average: ; Sum: 0</StatusCell>
        <ZoomCell>
          <button type="button" aria-label="Zoom out"><Svg size={8}><path d="M1 8h14" strokeWidth="3" stroke="#222" /></Svg></button>
          <ZoomSlider type="range" aria-label="Zoom" min={0} max={100} defaultValue={50} />
          <button type="button" aria-label="Zoom in"><Svg size={8}><path d="M1 8h14M8 1v14" strokeWidth="3" stroke="#222" /></Svg></button>
        </ZoomCell>
        <StatusCell>100%</StatusCell>
      </StatusBar>
    </Window>
  );
}
